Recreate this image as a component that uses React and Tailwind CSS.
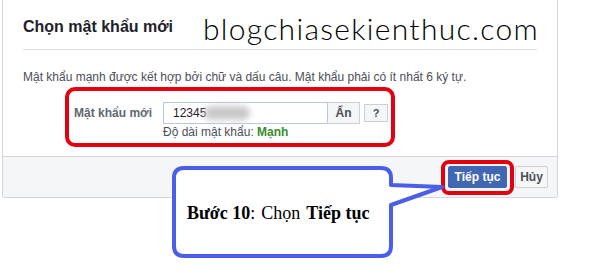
export default function App() {
  return (
    <div className="relative w-[592px] h-[275px] bg-white font-['Liberation_Sans',Arial,sans-serif] overflow-hidden">
      <div className="ml-[2px] w-[556px] border border-t-0 border-[#d3d6db] rounded-b-[3px] bg-white">
        <div className="mx-[20px] h-[50px] border-b border-[#dddfe2] flex items-center">
          <h1 className="text-[16px] font-bold text-[#1d2129] pt-[5px]">Chọn mật khẩu mới</h1>
        </div>

        <div className="px-[20px] pt-[19px] pb-[16px]">
          <p className="text-[12px] leading-[16px] text-[#4b4f56]">
            Mật khẩu mạnh được kết hợp bởi chữ và dấu câu. Mật khẩu phải có ít nhất 6 ký tự.
          </p>

          <div className="mt-[17px] flex items-center">
            <label className="w-[129px] text-right text-[12px] font-bold text-[#606770]">Mật khẩu mới</label>
            <div className="ml-[11px] relative w-[165px] h-[22px] border border-[#bdc7d8] bg-white flex items-center pl-[9px] text-[12px] text-[#1d2129]">
              12345
              <div className="absolute left-[40px] top-[3px] w-[46px] h-[14px] rounded-full bg-[#c8c8c8] blur-[3px]" />
            </div>
            <button className="w-[33px] h-[22px] -ml-px border border-[#ccd0d5] bg-[#f5f6f7] text-[12px] font-bold text-[#4b4f56]">
              Ẩn
            </button>
            <button className="ml-[4px] w-[24px] h-[18px] border border-[#ccd0d5] bg-[#f5f6f7] text-[11px] font-bold text-[#4b4f56] leading-none">
              ?
            </button>
          </div>

          <p className="ml-[140px] text-[12px] leading-[16px] text-[#4b4f56]">
            Độ dài mật khẩu: <span className="font-bold text-[#3b8b2f]">Mạnh</span>
          </p>
        </div>

        <div className="h-[41px] border-t border-[#d3d6db] bg-[#f5f6f7] rounded-b-[3px] flex items-center justify-end gap-[8px] pr-[9px]">
          <button className="w-[59px] h-[22px] border border-[#4267b2] bg-[#4267b2] rounded-[2px] text-[12px] font-bold text-white">
            Tiếp tục
          </button>
          <button className="w-[33px] h-[22px] border border-[#ced0d4] bg-[#f6f7f9] rounded-[2px] text-[12px] font-bold text-[#4b4f56]">
            Hủy
          </button>
        </div>
      </div>

      <div className="absolute left-[203px] top-[9px] font-['Lato',sans-serif] font-light text-[30px] leading-[38px] tracking-[1.3px] text-black">
        blogchiasekienthuc.com
      </div>

      <svg className="absolute inset-0 pointer-events-none" width="592" height="275" viewBox="0 0 592 275">
        <rect x="67" y="89" width="326" height="56" rx="8" fill="none" stroke="#e3000f" strokeWidth="4" />
        <rect x="443" y="162" width="69" height="31" rx="6" fill="none" stroke="#e3000f" strokeWidth="4" />
        <path
          d="M184,168 H381 Q391,168 391,178 V185 L442,187 L391,205 V246 Q391,256 381,256 H184 Q174,256 174,246 V178 Q174,168 184,168 Z"
          fill="#fff"
          stroke="#4a5ee6"
          strokeWidth="4"
          strokeLinejoin="round"
        />
      </svg>

      <div className="absolute left-[187px] top-[201px] font-['Liberation_Serif',serif] text-[18px] leading-[24px] text-black">
        <b>Bước 10</b>:<span className="ml-[6px]">Chọn</span>
        <b className="ml-[6px]">Tiếp tục</b>
      </div>
    </div>
  );
}
